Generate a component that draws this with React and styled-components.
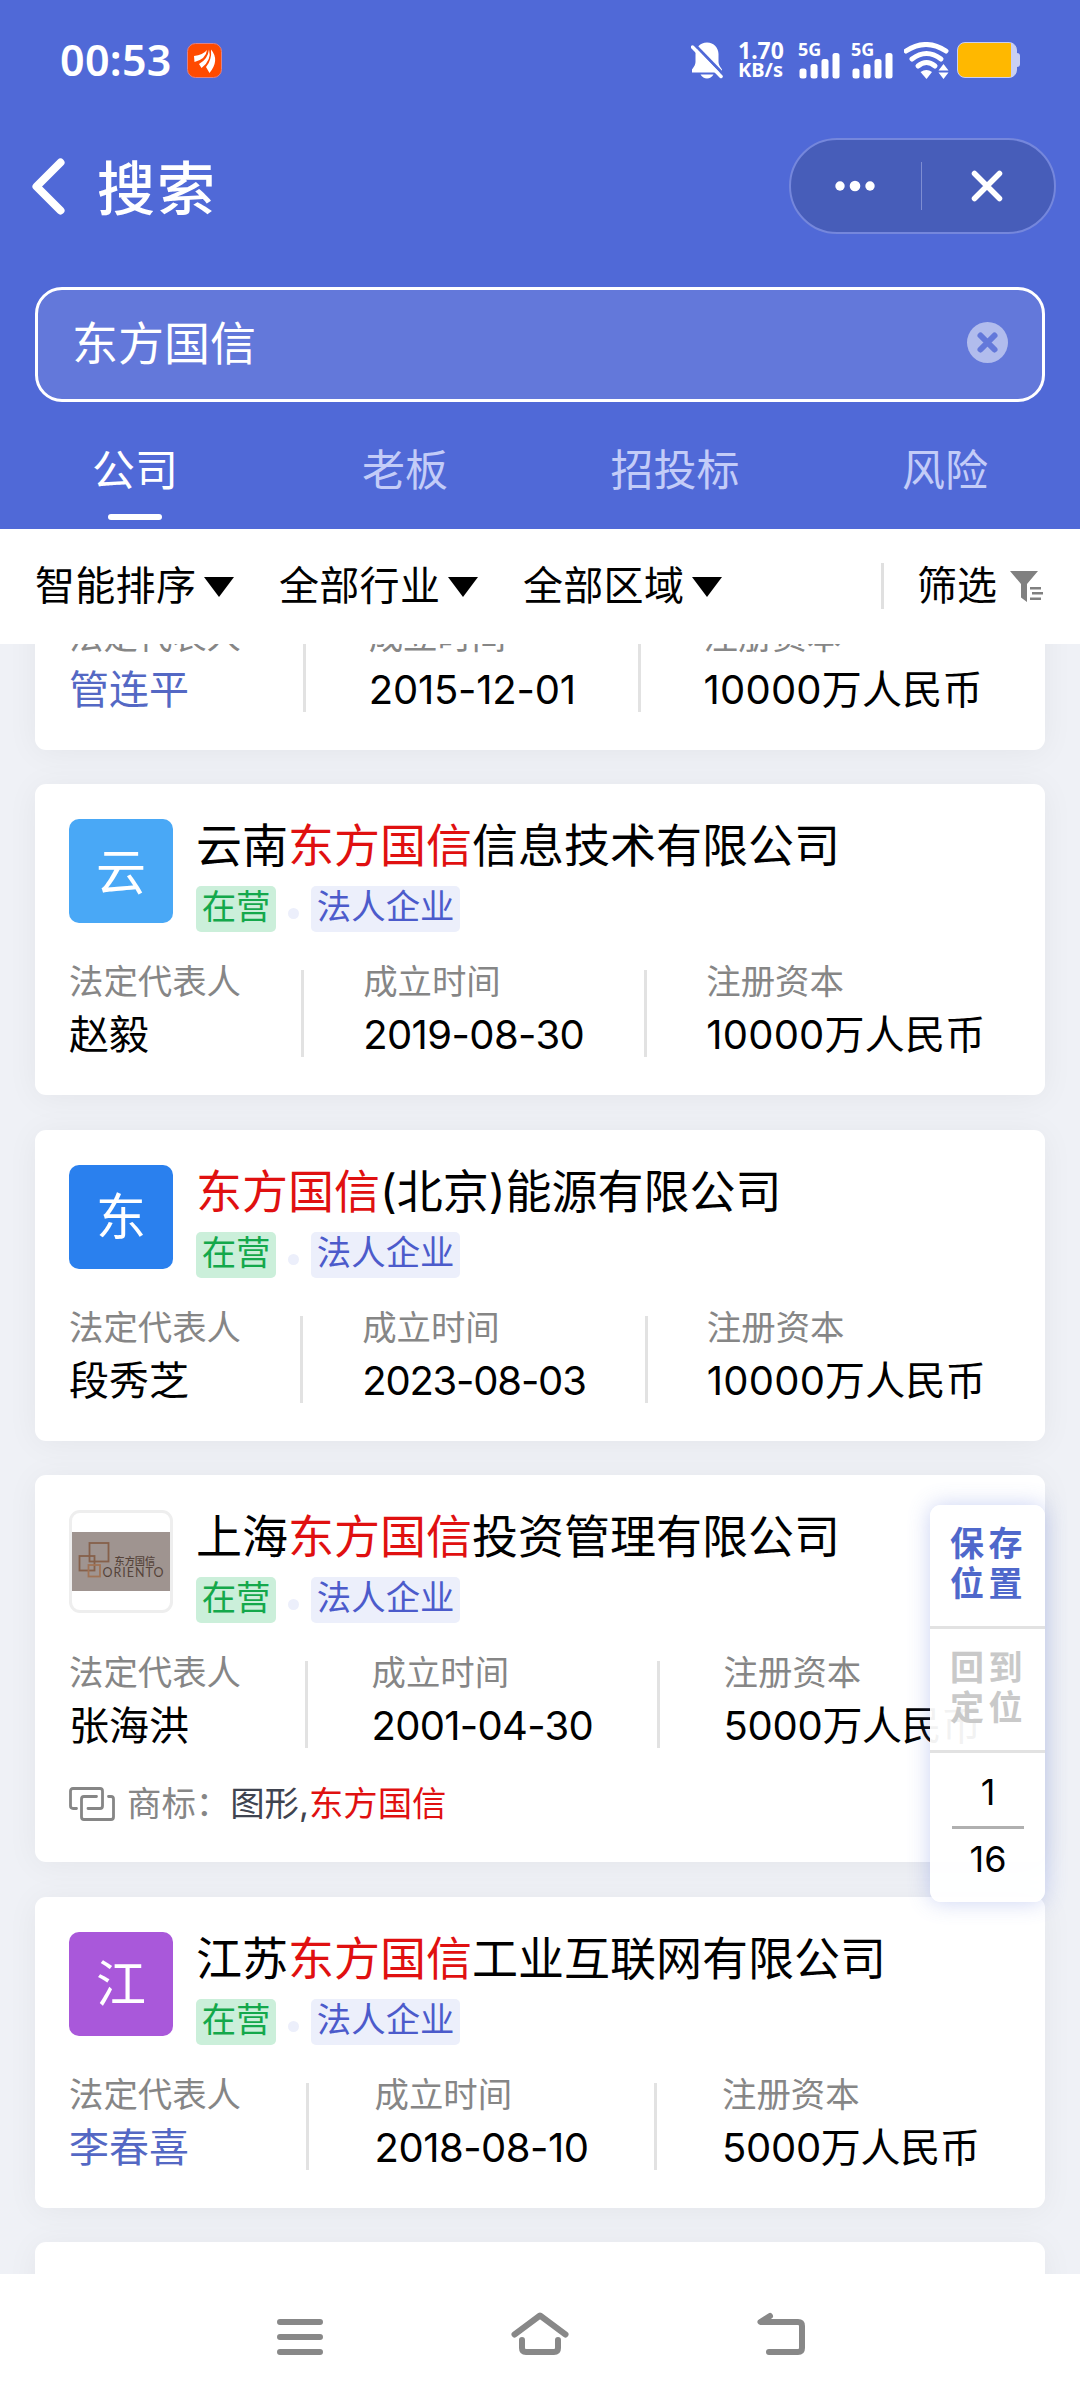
import styled, { createGlobalStyle } from 'styled-components';

const KEYWORD = '东方国信';

const TABS = ['公司', '老板', '招投标', '风险'];
const FILTERS = ['智能排序', '全部行业', '全部区域'];

const COMPANIES = [
	{ id: 1, name: '云南东方国信信息技术有限公司', short: '云', color: '#49a8f6', person: '赵毅', date: '2019-08-30', dateSpacing: -0.6, capital: '10000万人民币' },
	{ id: 2, name: '东方国信(北京)能源有限公司', short: '东', color: '#2a80ee', person: '段秀芝', date: '2023-08-03', dateSpacing: -1.2, capital: '10000万人民币' },
	{ id: 3, name: '上海东方国信投资管理有限公司', logo: true, person: '张海洪', date: '2001-04-30', dateSpacing: -0.7, capital: '5000万人民币', capitalSpacing: -0.3, brand: '图形,东方国信' },
	{ id: 4, name: '江苏东方国信工业互联网有限公司', short: '江', color: '#a958da', person: '李春喜', link: true, date: '2018-08-10', dateSpacing: -0.5, capital: '5000万人民币', capitalSpacing: -0.3 },
];

function Highlight({ text }) {
	const [before, after] = text.split(KEYWORD);
	return (
		<>
			{before}
			<Mark>{KEYWORD}</Mark>
			{after}
		</>
	);
}

function Signal() {
	return (
		<SignalBox>
			<small>5G</small>
			<svg width="41" height="26" viewBox="0 0 41 26" fill="#fff">
				<rect x="0.500" y="15.500" width="7" height="10" rx="2.500" />
				<rect x="11.500" y="11" width="7" height="14.500" rx="2.500" />
				<rect x="22.500" y="6" width="7" height="19.500" rx="2.500" />
				<rect x="33.500" y="0" width="7" height="25.500" rx="2.500" />
			</svg>
		</SignalBox>
	);
}

function StatusBar() {
	return (
		<Status>
			<Time>00:53</Time>
			<svg width="35" height="35" viewBox="0 0 35 35">
				<rect x="0.5" y="0.5" width="34" height="34" rx="8" fill="#ff4a00" stroke="#d9828a" />
				<g fill="#fff">
					<path d="M7 13 Q16 12 20 7 Q19 16 7.500 19 Z" />
					<path d="M12 21 Q21 16 22 6.500 Q25 17 14.500 25 Z" />
					<path d="M19 24 Q25 17 24 6.500 Q33 17 22.500 30 Z" />
				</g>
			</svg>
			<StatusRight>
				<svg width="32" height="37" viewBox="0 0 32 37">
					<path d="M16 0.500 C9 0.500 4.500 6 4.500 12 V20 Q4.500 23 1 27.500 V30.500 H31 V27.500 Q27.500 23 27.500 20 V12 C27.500 6 23 0.500 16 0.500 Z M9.500 32.500 H22.500 Q20 36.500 16 36.500 T9.500 32.500 Z" fill="#fff" />
					<path d="M3 2 L32 32" stroke="#5069d7" strokeWidth="3" />
					<path d="M1.500 5 L30 34.500" stroke="#fff" strokeWidth="3.500" strokeLinecap="round" />
				</svg>
				<Speed>
					<span>1.70</span>
					<span>KB/s</span>
				</Speed>
				<Signal />
				<Signal />
				<svg width="45" height="37" viewBox="0 0 45 37" fill="none" stroke="#fff" strokeWidth="5">
					<path d="M2 9 Q22 -4 42 9" strokeLinecap="round" />
					<path d="M8 17 Q22.500 6 37 17" strokeLinecap="round" />
					<path d="M14 24 Q22.500 17 31 24" strokeLinecap="round" />
					<path d="M16.500 30 Q22.500 26 28 30 L22.500 37 Z" fill="#fff" stroke="none" />
					<path d="M39.500 22 L44.500 28.500 H34.500 Z M34.500 30.500 H44.500 L39.500 37 Z" fill="#fff" stroke="none" />
				</svg>
				<Battery />
			</StatusRight>
		</Status>
	);
}

function Info({ person, link, date, dateSpacing, capital, capitalSpacing = 0.2 }) {
	return (
		<InfoRow>
			<Field>
				<Label>法定代表人</Label>
				<Value $link={link}>{person}</Value>
			</Field>
			<Divider />
			<Field>
				<Label>成立时间</Label>
				<Value $spacing={dateSpacing}>{date}</Value>
			</Field>
			<Divider />
			<Field>
				<Label>注册资本</Label>
				<Value $spacing={capitalSpacing}>{capital}</Value>
			</Field>
		</InfoRow>
	);
}

function BrandLogo() {
	return (
		<LogoFrame>
			<svg width="98" height="59" viewBox="0 0 98 59">
				<rect width="98" height="59" fill="#9f9490" />
				<g fill="none" stroke="#86604a" strokeWidth="1.800">
					<rect x="17.500" y="11" width="19" height="18.500" />
					<rect x="7.500" y="24" width="15" height="14.500" />
					<rect x="16.500" y="33" width="11.500" height="11.500" stroke="#a07355" />
				</g>
				<text x="42.500" y="32.500" fontSize="10.200" fontWeight="500" fill="#55433a">东方国信</text>
				<text x="30.500" y="45" fontSize="12.500" textLength="61" fill="#55433a" fontFamily="Lato, sans-serif">ORIENTO</text>
			</svg>
		</LogoFrame>
	);
}

function Company({ item }) {
	return (
		<Card>
			<Head>
				{item.logo ? <BrandLogo /> : <Avatar $color={item.color}>{item.short}</Avatar>}
				<HeadText>
					<Name>
						<Highlight text={item.name} />
					</Name>
					<Tags>
						<Tag $green>在营</Tag>
						<Dot />
						<Tag>法人企业</Tag>
					</Tags>
				</HeadText>
			</Head>
			<Info {...item} />
			{item.brand && (
				<Brand>
					<svg width="46" height="34" viewBox="0 0 46 34" fill="none" stroke="#868686" strokeWidth="2.800" strokeLinecap="round">
						<path d="M7.500 21.500 H4 Q1.500 21.500 1.500 19 V4 Q1.500 1.500 4 1.500 H31 Q33.500 1.500 33.500 4 V19 Q33.500 21.500 31 21.500 H19" />
						<path d="M27.500 9.500 H15 Q12.500 9.500 12.500 12 V30 Q12.500 32.500 15 32.500 H42 Q44.500 32.500 44.500 30 V12 Q44.500 9.500 42 9.500 H39.500" />
					</svg>
					<BrandLabel>商标：</BrandLabel>
					<span>
						<Highlight text={item.brand} />
					</span>
				</Brand>
			)}
		</Card>
	);
}

function App() {
	return (
		<Page>
			<GlobalStyle />
			<Header>
				<StatusBar />
				<TitleBar>
					<svg width="33" height="57" viewBox="0 0 33 57" fill="none" stroke="#fff" strokeWidth="8" strokeLinecap="round" strokeLinejoin="round">
						<path d="M28.500 4.500 L4.500 28.500 L28.500 52.500" />
					</svg>
					<Title>搜索</Title>
					<Capsule>
						<svg width="40" height="12" viewBox="0 0 40 12" fill="#fff">
							<circle cx="5" cy="6" r="4.700" />
							<circle cx="20" cy="6" r="5.300" />
							<circle cx="35" cy="6" r="4.700" />
						</svg>
						<CapsuleLine />
						<svg width="32" height="32" viewBox="0 0 32 32" stroke="#fff" strokeWidth="5.500" strokeLinecap="round">
							<path d="M3.500 3.500 L28.500 28.500 M28.500 3.500 L3.500 28.500" />
						</svg>
					</Capsule>
				</TitleBar>
				<SearchBox>
					<SearchText>{KEYWORD}</SearchText>
					<svg width="41" height="41" viewBox="0 0 41 41">
						<circle cx="20.500" cy="20.500" r="20.500" fill="#b1bced" />
						<path d="M13.500 13.500 L27.500 27.500 M27.500 13.500 L13.500 27.500" stroke="#6378da" strokeWidth="6" strokeLinecap="round" />
					</svg>
				</SearchBox>
				<Tabs>
					{TABS.map((tab, index) => (
						<Tab key={tab} $active={index === 0}>
							{tab}
						</Tab>
					))}
				</Tabs>
			</Header>

			<FilterBar>
				{FILTERS.map((filter) => (
					<Filter key={filter}>{filter}</Filter>
				))}
				<FilterMore>
					筛选
					<svg width="33" height="31" viewBox="0 0 33 31" fill="#808080">
						<path d="M0 0 H28 L17 13 V31 L11 26.500 V13 Z" />
						<path d="M20 16 H31 V18.500 H20 Z M22 21 H33 V23.500 H22 Z M20 26.500 H31 V29 H20 Z" />
					</svg>
				</FilterMore>
			</FilterBar>

			<List>
				<ClippedCard>
					<Info person="管连平" link date="2015-12-01" dateSpacing={-0.2} capital="10000万人民币" />
				</ClippedCard>
				{COMPANIES.map((item) => (
					<Company key={item.id} item={item} />
				))}
				<Card />
				<SidePanel>
					<SideButton>
						保存
						<br />
						位置
					</SideButton>
					<SideButton $disabled>
						回到
						<br />
						定位
					</SideButton>
					<Pager>
						<span>1</span>
						<span>16</span>
					</Pager>
				</SidePanel>
			</List>

			<NavBar>
				<svg width="46" height="36" viewBox="0 0 46 36" stroke="#888" strokeWidth="6" strokeLinecap="round">
					<path d="M3 3 H43 M3 18 H43 M3 33 H43" />
				</svg>
				<svg width="58" height="44" viewBox="0 0 58 44" fill="none" stroke="#888" strokeWidth="6" strokeLinecap="round" strokeLinejoin="round">
					<path d="M3.500 23.500 L29 4.500 L54.500 23.500" />
					<path d="M11 29 V37 Q11 41 15 41 H43 Q47 41 47 37 V29" />
				</svg>
				<svg width="48" height="43" viewBox="0 0 48 43" fill="none" stroke="#888" strokeWidth="6" strokeLinecap="round" strokeLinejoin="round">
					<path d="M13 4 L3.500 10 H41 Q45 10 45 14 V36 Q45 40 41 40 H12" />
				</svg>
			</NavBar>
		</Page>
	);
}

export default App;

const GlobalStyle = createGlobalStyle`
	* {
		box-sizing: border-box;
	}

	body {
		margin: 0;
		font-family: 'Inter', 'Noto Sans CJK SC', sans-serif;
		color: #000;
	}

	svg {
		display: block;
		flex-shrink: 0;
	}
`;

const Page = styled.div`
	width: 1080px;
	height: 2400px;
	display: flex;
	flex-direction: column;
	overflow: hidden;
	background-color: #fff;
`;

const Header = styled.header`
	height: 529px;
	flex-shrink: 0;
	background-color: #5069d7;
	color: #fff;
`;

const Status = styled.div`
	height: 120px;
	padding: 0 60px 0 60px;
	display: flex;
	align-items: center;
`;

const Time = styled.div`
	width: 127px;
	font: 600 43px/60px 'Noto Sans', sans-serif;
	letter-spacing: 0.3px;
`;

const StatusRight = styled.div`
	margin-left: auto;
	display: flex;
	align-items: center;
`;

const Speed = styled.div`
	width: 75px;
	padding-left: 15px;
	display: flex;
	flex-direction: column;
	font: 700 20px/20px 'Noto Sans', sans-serif;

	span:first-child {
		font-size: 23px;
	}
`;

const SignalBox = styled.div`
	width: 53px;
	height: 37px;
	display: flex;
	flex-direction: column;

	small {
		height: 11px;
		font: 700 18px/14px 'Noto Sans', sans-serif;
	}

	svg {
		margin-left: 1px;
	}
`;

const Battery = styled.div`
	position: relative;
	width: 60px;
	height: 36px;
	margin: 0 3px 0 8px;
	border: 1px solid #c9cff2;
	border-radius: 8px;
	background: linear-gradient(to right, #ffb800 53px, #c9cff2 53px);

	&::after {
		content: '';
		position: absolute;
		top: 10px;
		right: -4px;
		width: 4px;
		height: 14px;
		border-radius: 0 3px 3px 0;
		background-color: #c9cff2;
	}
`;

const TitleBar = styled.div`
	height: 132px;
	padding: 0 24px 0 32px;
	display: flex;
	align-items: center;
`;

const Title = styled.h1`
	margin: 6px 0 0 32px;
	font-size: 58px;
	font-weight: 500;
	line-height: 70px;
	letter-spacing: 2px;
`;

const Capsule = styled.div`
	width: 267px;
	height: 96px;
	margin-left: auto;
	padding: 0 51px 0 44px;
	display: flex;
	align-items: center;
	justify-content: space-between;
	border: 2px solid #7587dc;
	border-radius: 48px;
	background-color: #475db9;
`;

const CapsuleLine = styled.div`
	width: 1px;
	height: 48px;
	margin-right: 3px;
	background-color: #7e8dd2;
`;

const SearchBox = styled.div`
	height: 115px;
	margin: 35px 35px 0;
	padding: 0 34px 4px 34px;
	display: flex;
	align-items: center;
	justify-content: space-between;
	border: 3px solid #fff;
	border-radius: 27px;
	background-color: #6378da;
`;

const SearchText = styled.span`
	padding-bottom: 6px;
	font-size: 46px;
`;

const Tabs = styled.div`
	height: 127px;
	display: grid;
	grid-template-columns: repeat(4, 1fr);
`;

const Tab = styled.div`
	padding-top: 38px;
	display: flex;
	flex-direction: column;
	align-items: center;
	gap: 14px;
	font-size: 43px;
	line-height: 60px;
	color: ${(props) => (props.$active ? '#fff' : '#c3ccf8')};

	&::after {
		content: '';
		width: 54px;
		height: 6px;
		border-radius: 3px;
		background-color: ${(props) => (props.$active ? '#fff' : 'transparent')};
	}
`;

const FilterBar = styled.div`
	height: 115px;
	flex-shrink: 0;
	padding: 0 37px 1px 35px;
	display: flex;
	align-items: center;
	font-size: 40px;
`;

const Filter = styled.div`
	width: 244px;
	padding-bottom: 7px;
	display: flex;
	align-items: center;
	gap: 8px;
	letter-spacing: 0.3px;

	&::after {
		content: '';
		margin-top: 8px;
		border: 15px solid transparent;
		border-top: 20px solid #000;
		border-bottom: 0;
	}
`;

const FilterMore = styled.div`
	margin-left: auto;
	height: 46px;
	padding: 0 0 7px 33px;
	display: flex;
	align-items: center;
	gap: 13px;
	border-left: 3px solid #e0e0e0;

	svg {
		margin-top: 7px;
	}
`;

const List = styled.main`
	position: relative;
	height: 1630px;
	flex-shrink: 0;
	padding: 0 35px;
	display: flex;
	flex-direction: column;
	gap: 34.5px;
	overflow: hidden;
	background-color: #eff1f6;
`;

const Card = styled.section`
	min-height: 311px;
	flex-shrink: 0;
	padding: 35px 0 38px 34px;
	border-radius: 11px;
	background-color: #fff;
	box-shadow: 0 3px 32px rgba(0, 0, 0, 0.05);
`;

const ClippedCard = styled(Card)`
	min-height: 0;
	height: 311px;
	margin-top: -205.4px;
	padding-top: 177px;
`;

const Head = styled.div`
	height: 142px;
	display: flex;
	gap: 23px;
`;

const Avatar = styled.div`
	width: 104px;
	height: 104px;
	padding-bottom: 7px;
	display: flex;
	align-items: center;
	justify-content: center;
	border-radius: 10px;
	background-color: ${(props) => props.$color};
	color: #fff;
	font-size: 50px;
`;

const LogoFrame = styled.div`
	width: 104px;
	height: 103px;
	display: flex;
	align-items: center;
	border: 3px solid #eee;
	border-radius: 11px;
`;

const HeadText = styled.div`
	flex: 1;
`;

const Name = styled.h2`
	margin: 0;
	font-size: 46px;
	font-weight: 400;
	line-height: 52px;
`;

const Mark = styled.em`
	font-style: normal;
	color: #e01010;
`;

const Tags = styled.div`
	margin-top: 15px;
	display: flex;
	align-items: center;
`;

const Tag = styled.span`
	height: 46px;
	padding: 0 5.7px;
	border-radius: 5px;
	background-color: ${(props) => (props.$green ? '#cbefda' : '#eceffb')};
	color: ${(props) => (props.$green ? '#14a84b' : '#4c5bcb')};
	font-size: 34.4px;
	line-height: 41px;
`;

const Dot = styled.i`
	width: 11px;
	height: 11px;
	margin: 9px 12px 0;
	border-radius: 50%;
	background-color: #eceffb;
`;

/* the empty pseudo item keeps the same gap on the right edge */
const InfoRow = styled.div`
	height: 96px;
	display: flex;
	justify-content: space-between;

	&::after {
		content: '';
	}
`;

const Field = styled.div``;

const Label = styled.div`
	font-size: 34.4px;
	line-height: 42px;
	color: #868686;
`;

const Value = styled.div`
	margin-top: 8px;
	font-size: 40px;
	line-height: 48px;
	letter-spacing: ${(props) => props.$spacing || 0}px;
	color: ${(props) => (props.$link ? '#5468c4' : '#000')};
`;

const Divider = styled.div`
	width: 3px;
	height: 87px;
	margin-top: 9px;
	background-color: #e2e2e2;
`;

const Brand = styled.div`
	height: 76px;
	padding-top: 36px;
	display: flex;
	align-items: center;
	font-size: 34.4px;
	line-height: 42px;
	color: #3f4450;
`;

const BrandLabel = styled.span`
	margin-left: 12px;
	color: #868686;
`;

const SidePanel = styled.aside`
	position: absolute;
	top: 861px;
	right: 35px;
	width: 115px;
	height: 397px;
	border-radius: 11px;
	background-color: rgba(255, 255, 255, 0.95);
	box-shadow: 0 0 22px rgba(80, 105, 215, 0.3);
`;

const SideButton = styled.div`
	height: 124px;
	padding: 19px 0 0 20px;
	border-bottom: 3px solid #e2e2e2;
	color: ${(props) => (props.$disabled ? '#c9c9c9' : '#4f68cb')};
	font-size: 34px;
	font-weight: 700;
	line-height: 40px;
	letter-spacing: 4.5px;
`;

const Pager = styled.div`
	padding: 12px 21px 0 22px;
	display: flex;
	flex-direction: column;
	font-size: 36px;
	line-height: 54px;
	text-align: center;

	span + span {
		margin-top: 7px;
		padding-top: 3px;
		border-top: 3px solid #b0b0b0;
	}
`;

const NavBar = styled.nav`
	height: 126px;
	padding: 0 275px 45px 277px;
	display: flex;
	align-items: flex-end;
	justify-content: space-between;
`;
